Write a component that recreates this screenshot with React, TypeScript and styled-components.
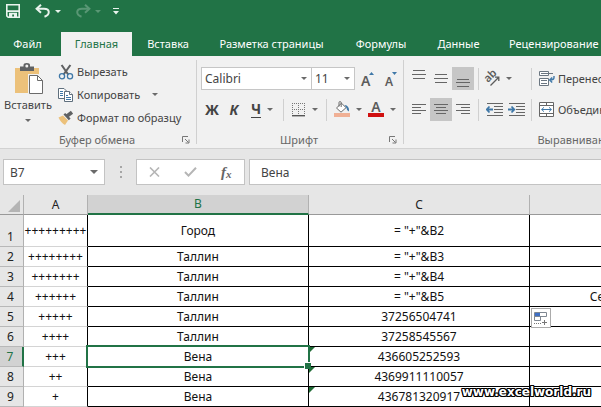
import React from "react";
import styled, { createGlobalStyle, css } from "styled-components";

const green = "#217346";
const ink = "#444444";
const grey = "#6a6a6a";
const blue = "#3f78a8";

const GlobalStyle = createGlobalStyle`
  * { box-sizing: border-box; }
  html, body { margin: 0; padding: 0; overflow: hidden; }
  body, button, input, select {
    font-family: "Noto Sans", "Open Sans", sans-serif;
    font-size: 12px;
    line-height: 16px;
    color: ${ink};
  }
  button, input, select { margin: 0; padding: 0; border: 0; background: none; outline: none; border-radius: 0; }
`;

const Page = styled.div`
  position: relative;
  background: #e6e6e6;
  overflow: hidden;
`;

/* ---------- title bar and tabs ---------- */

const TitleBar = styled.header`
  display: flex;
  align-items: center;
  height: 32px;
  padding: 0 0 10px 6px;
  background: ${green};
`;

const QuickButton = styled.button<{ $width: number; $faded?: boolean }>`
  display: flex;
  align-items: center;
  width: ${(p) => p.$width}px;
  height: 18px;
  color: #e9f3ed;
  opacity: ${(p) => (p.$faded ? 0.28 : 1)};
`;

const TabBar = styled.nav`
  display: grid;
  grid-template-columns: 61px 71px 72px 135px 84px 71px minmax(100px, 1fr);
  height: 24px;
  background: ${green};
`;

const Tab = styled.button<{ $active?: boolean; $start?: boolean }>`
  height: 24px;
  padding: 0 0 0 ${(p) => (p.$start ? 15 : 0)}px;
  font-size: 11px;
  text-align: ${(p) => (p.$start ? "left" : "center")};
  white-space: nowrap;
  color: ${(p) => (p.$active ? green : "#ffffff")};
  background: ${(p) => (p.$active ? "#f1f1f1" : "transparent")};
`;

const FileTab = styled(Tab)`
  padding-right: 6px;
`;

/* ---------- ribbon ---------- */

const Ribbon = styled.section`
  display: flex;
  height: 93px;
  padding-top: 4px;
  background: #f1f1f1;
  border-bottom: 1px solid #d2d2d2;
  overflow: hidden;
`;

const Group = styled.div<{ $width: number }>`
  display: flex;
  flex-direction: column;
  flex: none;
  width: ${(p) => p.$width}px;
  height: 84px;
  border-right: 1px solid #d0d0d0;
`;

const GroupBody = styled.div`
  display: flex;
  flex: 1;
`;

const GroupFooter = styled.div`
  display: grid;
  grid-template-columns: 16px 1fr 16px;
  align-items: center;
  height: 16px;
  margin-bottom: -4px;
  padding-right: 2px;
  font-size: 11px;
  text-align: center;
  color: #666666;
`;

const FooterTitle = styled.span`
  grid-column: 2;
`;

const Launcher = styled.button`
  display: flex;
  align-items: center;
  justify-content: center;
  height: 16px;
`;

const PasteButton = styled.button`
  display: flex;
  flex-direction: column;
  align-items: center;
  width: 56px;
  padding-top: 3px;
  font-size: 11px;
`;

const PasteLabel = styled.span`
  margin: 2px 0 6px;
`;

const CommandList = styled.div`
  display: flex;
  flex-direction: column;
`;

const Command = styled.button`
  display: flex;
  align-items: center;
  gap: 3px;
  height: 23px;
  padding-left: 2px;
  font-size: 11px;
  white-space: nowrap;
  text-align: left;
`;

const CommandGap = styled.span`
  width: 6px;
`;

const Rows = styled.div`
  display: flex;
  flex-direction: column;
  gap: 8px;
  padding: 7px 0 0 4px;
`;

const ToolRow = styled.div`
  display: flex;
  align-items: center;
  height: 23px;
`;

const ComboBox = styled.label<{ $width: number }>`
  display: grid;
  width: ${(p) => p.$width}px;
  height: 23px;
  align-items: center;
  background: #ffffff;
  border: 1px solid #c6c6c6;
  & + & { border-left: 0; }
  > * { grid-area: 1 / 1; }
  > svg { justify-self: end; margin-right: 4px; pointer-events: none; }
`;

const Select = styled.select`
  appearance: none;
  width: 100%;
  height: 21px;
  padding-left: 3px;
`;

const Tool = styled.button<{ $width: number; $active?: boolean; $start?: boolean }>`
  display: flex;
  flex: none;
  align-items: center;
  justify-content: ${(p) => (p.$start ? "flex-start" : "center")};
  gap: 6px;
  width: ${(p) => p.$width}px;
  height: 23px;
  background: ${(p) => (p.$active ? "#c6c6c6" : "transparent")};
`;

const Letter = styled.span<{ $kind: "bold" | "italic" | "underline" }>`
  font-size: 14px;
  font-weight: 700;
  line-height: 16px;
  ${(p) => p.$kind === "italic" && css`font-style: italic;`}
  ${(p) => p.$kind === "underline" && css`border-bottom: 1px solid ${ink};`}
`;

const Divider = styled.span<{ $space: number }>`
  flex: none;
  width: 1px;
  height: 22px;
  margin: 0 ${(p) => p.$space}px;
  background: #d0d0d0;
`;

const WideCommand = styled(Command)`
  padding: 0 0 0 3px;
`;

/* ---------- formula bar ---------- */

const FormulaBar = styled.section`
  display: flex;
  align-items: center;
  height: 46px;
  padding: 0 0 0 3px;
`;

const Box = styled.div<{ $width: number }>`
  display: flex;
  flex: none;
  align-items: center;
  width: ${(p) => p.$width}px;
  height: 26px;
  background: #ffffff;
  border: 1px solid #c3c3c3;
`;

const GrowBox = styled(Box)`
  flex: 1;
  width: auto;
  margin-left: 4px;
  border-right: 0;
`;

const BoxInput = styled.input<{ $indent: number }>`
  flex: 1;
  min-width: 0;
  height: 24px;
  padding-left: ${(p) => p.$indent}px;
`;

const BoxButton = styled.button<{ $width: number }>`
  display: flex;
  align-items: center;
  justify-content: center;
  width: ${(p) => p.$width}px;
  height: 24px;
`;

const Grip = styled.span`
  display: flex;
  flex-direction: column;
  align-items: center;
  gap: 3px;
  width: 31px;
`;

const GripDot = styled.i`
  width: 2px;
  height: 2px;
  background: #a6a6a6;
`;

const FxLabel = styled.span`
  font-family: "Liberation Serif", serif;
  font-size: 15px;
  font-style: italic;
  font-weight: 700;
  color: #666666;
  sub { font-size: 11px; line-height: 8px; vertical-align: -1px; }
`;

/* ---------- sheet ---------- */

const Sheet = styled.table`
  width: 100%;
  min-width: 605px;
  table-layout: fixed;
  border-spacing: 0;
  background: #ffffff;
  color: #111111;
  text-align: center;
`;

const Column = styled.col<{ $width?: number }>`
  ${(p) => p.$width && css`width: ${p.$width}px;`}
`;

const ColumnHead = styled.th<{ $selected?: boolean }>`
  height: 20px;
  padding: 0;
  font-weight: 400;
  color: ${(p) => (p.$selected ? green : "#222222")};
  background: ${(p) => (p.$selected ? "#d2d2d2" : "#e6e6e6")};
  border-right: 1px solid #b1b1b1;
  border-bottom: ${(p) => (p.$selected ? `2px solid ${green}` : "1px solid #999999")};
`;

const Corner = styled(ColumnHead)`
  svg { display: block; margin: 2px 0 0 8px; }
`;

const RowHead = styled.th<{ $selected?: boolean; $tall?: boolean }>`
  height: ${(p) => (p.$tall ? 32 : 20)}px;
  padding: 0 2px 0 0;
  font-weight: 400;
  vertical-align: bottom;
  line-height: 18px;
  color: ${(p) => (p.$selected ? green : "#222222")};
  background: ${(p) => (p.$selected ? "#d2d2d2" : "#e6e6e6")};
  border-right: ${(p) => (p.$selected ? `2px solid ${green}` : "1px solid #b1b1b1")};
  border-bottom: 1px solid #b8b8b8;
`;

const Cell = styled.td<{ $light?: boolean; $align?: "right" }>`
  position: relative;
  padding: 0;
  line-height: 18px;
  white-space: nowrap;
  text-align: ${(p) => p.$align ?? "center"};
  border-right: 1px solid #000000;
  border-bottom: 1px solid ${(p) => (p.$light ? "#d4d4d4" : "#000000")};
`;

const Selection = styled.span`
  position: absolute;
  z-index: 2;
  inset: -2px;
  border: 2px solid ${green};
  pointer-events: none;
  &::after {
    content: "";
    position: absolute;
    right: -3px;
    bottom: -3px;
    width: 6px;
    height: 6px;
    background: ${green};
    border: solid #ffffff;
    border-width: 1px 0 0 1px;
  }
`;

const Warning = styled.span`
  position: absolute;
  top: 0;
  left: 0;
  border-top: 6px solid #1f6b35;
  border-right: 6px solid transparent;
`;

const FillOptions = styled.button`
  position: absolute;
  z-index: 3;
  top: 1px;
  left: 1px;
  display: flex;
  align-items: center;
  justify-content: center;
  width: 20px;
  height: 20px;
  background: #ffffff;
  border: 1px solid #ababab;
`;

const Watermark = styled.a`
  position: absolute;
  right: 10px;
  bottom: 6px;
  z-index: 4;
  font: 700 12px/18px "DejaVu Sans", Verdana, sans-serif;
  color: #ffffff;
  text-decoration: none;
  text-shadow: -1px -1px 0 #000, 1px -1px 0 #000, -1px 1px 0 #000, 1px 1px 0 #000,
    0 -1px 0 #000, 0 1px 0 #000, -1px 0 0 #000, 1px 0 0 #000;
`;

/* ---------- icons ---------- */

const Arrow = ({ color = grey, size = 6 }: { color?: string; size?: number }) => (
  <svg width={size} height={size / 2} viewBox="0 0 6 3" aria-hidden="true">
    <path d="M0 0H6L3 3Z" fill={color} />
  </svg>
);

const SaveIcon = () => (
  <svg width="14" height="14" viewBox="0 0 14 14">
    <path d="M0.8 0.8H13.2V13.2H2.2L0.8 11.8Z" fill="none" stroke="currentColor" strokeWidth="1.6" />
    <path d="M1 6.2H13V8H1ZM3 8.8H11V13H8V10.5H6.2V13H3Z" fill="currentColor" />
  </svg>
);

const UndoIcon = ({ flip = false }: { flip?: boolean }) => (
  <svg width="16" height="14" viewBox="0 0 16 14">
    <g fill="none" stroke="currentColor" strokeWidth="2" transform={flip ? "translate(16 0) scale(-1 1)" : undefined}>
      <path d="M6 0.8L1.6 4.8L6 8.8" />
      <path d="M2 4.8H9C15 4.8 15.5 10.5 9.5 12.8" />
    </g>
  </svg>
);

const CustomizeIcon = () => (
  <svg width="6" height="7" viewBox="0 0 6 7">
    <path d="M0 0H6V1H0ZM0 3H6L3 6.4Z" fill="currentColor" />
  </svg>
);

const PasteIcon = () => (
  <svg width="34" height="32" viewBox="-4 0 34 32">
    <path d="M0 5H24V30H0Z" fill="#ecc17a" />
    <path d="M5 3.5H8.5V2Q8.5 0 11.8 0T15 2V3.5H19V8H5Z" fill="#5f6163" />
    <circle cx="11.8" cy="3" r="1.5" fill="#f1f1f1" />
    <path d="M13 11H23.5L29 16V31H13Z" fill="#f1f1f1" />
    <path d="M14.5 12.5H22.5L27.5 17.5V30.5H14.5Z" fill="#fff" stroke="#6b6b6b" />
    <path d="M22.5 12.5V17.5H27.5" fill="none" stroke="#6b6b6b" />
  </svg>
);

const CutIcon = () => (
  <svg width="16" height="16" viewBox="0 0 16 16">
    <path d="M3.6 1L10.2 10.5M12.4 1L5.6 10.5" stroke="#5f6163" strokeWidth="2.1" fill="none" />
    <circle cx="4" cy="12.2" r="2.6" fill="none" stroke={blue} strokeWidth="1.3" />
    <circle cx="12" cy="12.2" r="2.6" fill="none" stroke={blue} strokeWidth="1.3" />
  </svg>
);

const CopyIcon = () => (
  <svg width="16" height="16" viewBox="0 0 16 16">
    <g fill="#fff" stroke="#5f6f7d">
      <path d="M0.5 1.5H6L8.5 4V11.5H0.5Z" />
      <path d="M6.5 4.5H11.5L14.5 7.5V14.5H6.5Z" />
      <path d="M11.5 4.5V7.5H14.5" />
    </g>
    <path d="M2 4.5H5M2 6.5H5M2 8.5H5M8 8.5H10M8 10.5H13M8 12.5H13" stroke={blue} />
  </svg>
);

const BrushIcon = () => (
  <svg width="16" height="16" viewBox="0 0 16 16">
    <path d="M0.5 7.5L5 5.5L10 10.5L7 15Q3 13 0.5 7.5Z" fill="#ecc17a" />
    <path d="M5.5 4.5L7.2 3L12.6 8.4L10.8 10.2Z" fill="#5f6163" />
    <path d="M9 6L14 2.2" stroke="#5f6163" strokeWidth="3.6" />
  </svg>
);

const LauncherIcon = () => (
  <svg width="8" height="8" viewBox="0 0 8 8">
    <path d="M0.5 6V0.5H6M3 3L6.5 6.5M7 3.5V7H3.5" fill="none" stroke="#777" />
  </svg>
);

const IconLetter = styled.text`
  font-family: "Noto Sans", sans-serif;
  font-weight: 600;
  fill: #5c5c5c;
`;

const FontSizeIcon = ({ up }: { up?: boolean }) => (
  <svg width="16" height="18" viewBox="0 0 16 18">
    {up ? (
      <>
        <IconLetter x="1" y="16" fontSize="14">A</IconLetter>
        <path d="M9 5L11.5 2L14 5Z" fill={blue} />
      </>
    ) : (
      <>
        <IconLetter x="2" y="16" fontSize="12">A</IconLetter>
        <path d="M9 2H14L11.5 5Z" fill={blue} />
      </>
    )}
  </svg>
);

const BorderIcon = () => (
  <svg width="14" height="14" viewBox="0 0 14 14">
    <path d="M0.5 0V12M6.5 0V12M12.5 0V12M0 0.5H13M0 6.5H13" stroke="#777" strokeDasharray="1 1" />
    <path d="M0 12.7H13" stroke="#555" strokeWidth="1.4" />
  </svg>
);

const FillIcon = () => (
  <svg width="16" height="17" viewBox="0 0 16 17">
    <path d="M2.5 7L7.5 2.2L12 6.7L7 11.2Z" fill="#fff" stroke="#6b6b6b" />
    <path d="M5 5.5V1.5Q5 0.6 6 0.6T7.2 1.6V6" fill="none" stroke="#6b6b6b" />
    <path d="M10.5 4Q15.5 4.5 15 10.5Q12.5 9.5 12.5 7Z" fill={blue} />
    <path d="M0 12H16V16H0Z" fill="#f0b095" />
  </svg>
);

const FontColorIcon = () => (
  <svg width="16" height="17" viewBox="0 0 16 17">
    <IconLetter x="8" y="11" fontSize="14" textAnchor="middle">A</IconLetter>
    <path d="M0 12H16V16H0Z" fill="#d01010" />
  </svg>
);

const LinesIcon = ({ lines }: { lines: [number, number, number][] }) => (
  <svg width="14" height="19" viewBox="0 0 14 19">
    {lines.map(([y, from, to]) => (
      <path key={y} d={`M${from} ${y}.5H${to}`} stroke="#666" />
    ))}
  </svg>
);

const OrientationIcon = () => (
  <svg width="17" height="17" viewBox="0 0 17 17">
    <IconLetter x="0" y="0" fontSize="11" transform="translate(5 13) rotate(-45)">ab</IconLetter>
    <path d="M7.5 15.5L15.5 7.5M12 7.2H15.8V11" fill="none" stroke="#5c5c5c" strokeWidth="1.3" />
  </svg>
);

const IndentIcon = ({ right }: { right?: boolean }) => (
  <svg width="17" height="14" viewBox="0 0 17 14">
    <path d="M1 0.5H17M8 3.5H17M8 6.5H17M8 9.5H17M1 12.5H17" stroke="#666" />
    <path d={right ? "M0 6.5H6M3.5 3.5L6.3 6.5L3.5 9.5" : "M1 6.5H7M3.5 3.5L0.7 6.5L3.5 9.5"} fill="none" stroke={blue} strokeWidth="1.8" />
  </svg>
);

const WrapIcon = () => (
  <svg width="16" height="16" viewBox="0 0 16 16">
    <path d="M0.5 0.5H9.5V4.5H0.5ZM0.5 7.5H9.5V14.5H0.5Z" fill="#fff" stroke="#6b7681" />
    <path d="M2 2.5H14M2 9.5H8M2 12.5H8" stroke="#6b7681" />
    <path d="M15 5V6.5Q15 9 11 9M13.2 6.5L10.7 9L13.2 11.5" fill="none" stroke={blue} strokeWidth="1.4" />
  </svg>
);

const MergeIcon = () => (
  <svg width="16" height="16" viewBox="0 0 16 16">
    <path d="M0.5 0.5H14.5V14.5H0.5ZM0.5 3.5H14.5M0.5 11.5H14.5M7.5 0.5V3.5M7.5 11.5V14.5" fill="#fff" stroke="#666" />
    <path d="M2.5 7.5H12.5M5 5.3L2.7 7.5L5 9.7M10 5.3L12.3 7.5L10 9.7" fill="none" stroke={blue} />
  </svg>
);

const CrossIcon = () => (
  <svg width="11" height="10" viewBox="0 0 11 10">
    <path d="M1 0.5L10 9.5M10 0.5L1 9.5" stroke="#b5b5b5" strokeWidth="1.6" />
  </svg>
);

const CheckIcon = () => (
  <svg width="13" height="10" viewBox="0 0 13 10">
    <path d="M1 5L4.5 8.6L12 0.8" fill="none" stroke="#b5b5b5" strokeWidth="2" />
  </svg>
);

const FillOptionsIcon = () => (
  <svg width="16" height="16" viewBox="0 0 16 16">
    <path d="M1.5 2.5H13.5V6.5H1.5ZM1.5 6.5H7.5V10.5H1.5Z" fill="#fff" stroke="#7f8791" />
    <path d="M2 3H7V6H2Z" fill="#3f6fc4" />
    <path d="M1 13.5H8" stroke="#777" strokeDasharray="1 1" />
    <path d="M9 12.5H14M11.5 10V15" stroke="#777" />
  </svg>
);

/* ---------- data ---------- */

type Row = { n: number; a: string; b: string; c: string; d?: string };

const rows: Row[] = [
  { n: 1, a: "+++++++++", b: "Город", c: '= "+"&B2' },
  { n: 2, a: "++++++++", b: "Таллин", c: '= "+"&B3' },
  { n: 3, a: "+++++++", b: "Таллин", c: '= "+"&B4' },
  { n: 4, a: "++++++", b: "Таллин", c: '= "+"&B5', d: "Се" },
  { n: 5, a: "+++++", b: "Таллин", c: "37256504741" },
  { n: 6, a: "++++", b: "Таллин", c: "37258545567" },
  { n: 7, a: "+++", b: "Вена", c: "436605252593" },
  { n: 8, a: "++", b: "Вена", c: "4369911110057" },
  { n: 9, a: "+", b: "Вена", c: "436781320917" },
];

const selectedRow = 7;

export default function App() {
  return (
    <Page>
      <GlobalStyle />
      <TitleBar>
        <QuickButton $width={29} aria-label="Сохранить"><SaveIcon /></QuickButton>
        <QuickButton $width={20} aria-label="Отменить"><UndoIcon /></QuickButton>
        <QuickButton $width={20} aria-label="Список отмены"><Arrow color="currentColor" /></QuickButton>
        <QuickButton $width={20} $faded aria-label="Вернуть"><UndoIcon flip /></QuickButton>
        <QuickButton $width={18} $faded aria-label="Список возврата"><Arrow color="currentColor" /></QuickButton>
        <QuickButton $width={10} aria-label="Настройка панели"><CustomizeIcon /></QuickButton>
      </TitleBar>
      <TabBar>
        <FileTab>Файл</FileTab>
        <Tab $active>Главная</Tab>
        <Tab>Вставка</Tab>
        <Tab>Разметка страницы</Tab>
        <Tab>Формулы</Tab>
        <Tab>Данные</Tab>
        <Tab $start>Рецензирование</Tab>
      </TabBar>

      <Ribbon>
        <Group $width={197}>
          <GroupBody>
            <PasteButton>
              <PasteIcon />
              <PasteLabel>Вставить</PasteLabel>
              <Arrow />
            </PasteButton>
            <CommandList>
              <Command><CutIcon />Вырезать</Command>
              <Command><CopyIcon />Копировать<CommandGap /><Arrow /></Command>
              <Command><BrushIcon />Формат по образцу</Command>
            </CommandList>
          </GroupBody>
          <GroupFooter>
            <FooterTitle>Буфер обмена</FooterTitle>
            <Launcher aria-label="Параметры буфера обмена"><LauncherIcon /></Launcher>
          </GroupFooter>
        </Group>

        <Group $width={207}>
          <GroupBody>
            <Rows>
              <ToolRow>
                <ComboBox $width={111}>
                  <Select aria-label="Шрифт" defaultValue="Calibri"><option>Calibri</option></Select>
                  <Arrow />
                </ComboBox>
                <ComboBox $width={43}>
                  <Select aria-label="Размер шрифта" defaultValue="11"><option>11</option></Select>
                  <Arrow />
                </ComboBox>
                <Tool $width={26} aria-label="Увеличить размер"><FontSizeIcon up /></Tool>
                <Tool $width={20} aria-label="Уменьшить размер"><FontSizeIcon /></Tool>
              </ToolRow>
              <ToolRow>
                <Tool $width={22}><Letter $kind="bold">Ж</Letter></Tool>
                <Tool $width={22}><Letter $kind="italic">К</Letter></Tool>
                <Tool $width={34}><Letter $kind="underline">Ч</Letter><Arrow /></Tool>
                <Divider $space={4} />
                <Tool $width={34} aria-label="Границы"><BorderIcon /><Arrow /></Tool>
                <Divider $space={4} />
                <Tool $width={34} aria-label="Цвет заливки"><FillIcon /><Arrow /></Tool>
                <Tool $width={34} aria-label="Цвет текста"><FontColorIcon /><Arrow /></Tool>
              </ToolRow>
            </Rows>
          </GroupBody>
          <GroupFooter>
            <FooterTitle>Шрифт</FooterTitle>
            <Launcher aria-label="Параметры шрифта"><LauncherIcon /></Launcher>
          </GroupFooter>
        </Group>

        <Group $width={350}>
          <GroupBody>
            <Rows>
              <ToolRow>
                <Tool $width={22} aria-label="По верхнему краю"><LinesIcon lines={[[1, 1, 13], [5, 0, 14], [9, 1, 13]]} /></Tool>
                <Tool $width={22} aria-label="По середине"><LinesIcon lines={[[5, 1, 13], [9, 0, 14], [13, 1, 13]]} /></Tool>
                <Tool $width={22} $active aria-label="По нижнему краю"><LinesIcon lines={[[10, 1, 13], [13, 0, 14], [17, 1, 13]]} /></Tool>
                <Divider $space={4} />
                <Tool $width={44} $start aria-label="Ориентация"><OrientationIcon /><Arrow /></Tool>
                <Divider $space={4} />
                <WideCommand><WrapIcon />Перенести текст</WideCommand>
              </ToolRow>
              <ToolRow>
                <Tool $width={22} aria-label="По левому краю"><LinesIcon lines={[[4, 0, 14], [7, 0, 9], [10, 0, 14], [13, 0, 9]]} /></Tool>
                <Tool $width={22} $active aria-label="По центру"><LinesIcon lines={[[4, 0, 14], [7, 2, 12], [10, 0, 14], [13, 2, 12]]} /></Tool>
                <Tool $width={22} aria-label="По правому краю"><LinesIcon lines={[[4, 0, 14], [7, 5, 14], [10, 0, 14], [13, 5, 14]]} /></Tool>
                <Divider $space={4} />
                <Tool $width={22} aria-label="Уменьшить отступ"><IndentIcon /></Tool>
                <Tool $width={22} aria-label="Увеличить отступ"><IndentIcon right /></Tool>
                <Divider $space={4} />
                <WideCommand><MergeIcon />Объединить и поместить в центре</WideCommand>
              </ToolRow>
            </Rows>
          </GroupBody>
          <GroupFooter>
            <FooterTitle>Выравнивание</FooterTitle>
          </GroupFooter>
        </Group>
      </Ribbon>

      <FormulaBar>
        <Box $width={102}>
          <BoxInput $indent={6} aria-label="Имя ячейки" defaultValue="B7" />
          <BoxButton $width={20} aria-label="Список имён"><Arrow size={8} /></BoxButton>
        </Box>
        <Grip><GripDot /><GripDot /><GripDot /></Grip>
        <Box $width={109}>
          <BoxButton $width={36} aria-label="Отмена"><CrossIcon /></BoxButton>
          <BoxButton $width={36} aria-label="Ввод"><CheckIcon /></BoxButton>
          <BoxButton $width={36} aria-label="Вставить функцию"><FxLabel>f<sub>x</sub></FxLabel></BoxButton>
        </Box>
        <GrowBox $width={0}>
          <BoxInput $indent={11} aria-label="Строка формул" defaultValue="Вена" />
        </GrowBox>
      </FormulaBar>

      <Sheet>
        <colgroup>
          <Column $width={24} />
          <Column $width={64} />
          <Column $width={221} />
          <Column $width={221} />
          <Column />
        </colgroup>
        <thead>
          <tr>
            <Corner aria-label="Выделить всё">
              <svg width="12" height="12" viewBox="0 0 12 12"><path d="M12 0V12H0Z" fill="#b4b4b4" /></svg>
            </Corner>
            <ColumnHead>A</ColumnHead>
            <ColumnHead $selected>B</ColumnHead>
            <ColumnHead>C</ColumnHead>
            <ColumnHead aria-label="D" />
          </tr>
        </thead>
        <tbody>
          {rows.map((row) => (
            <tr key={row.n}>
              <RowHead $tall={row.n === 1} $selected={row.n === selectedRow}>{row.n}</RowHead>
              <Cell $light>{row.a}</Cell>
              <Cell>
                {row.b}
                {row.n === selectedRow && <Selection />}
              </Cell>
              <Cell>
                {row.n >= 7 && <Warning />}
                {row.c}
              </Cell>
              <Cell $align="right">
                {row.d}
                {row.n === 5 && <FillOptions aria-label="Параметры автозаполнения"><FillOptionsIcon /></FillOptions>}
              </Cell>
            </tr>
          ))}
        </tbody>
      </Sheet>
      <Watermark href="#">www.excelworld.ru</Watermark>
    </Page>
  );
}
